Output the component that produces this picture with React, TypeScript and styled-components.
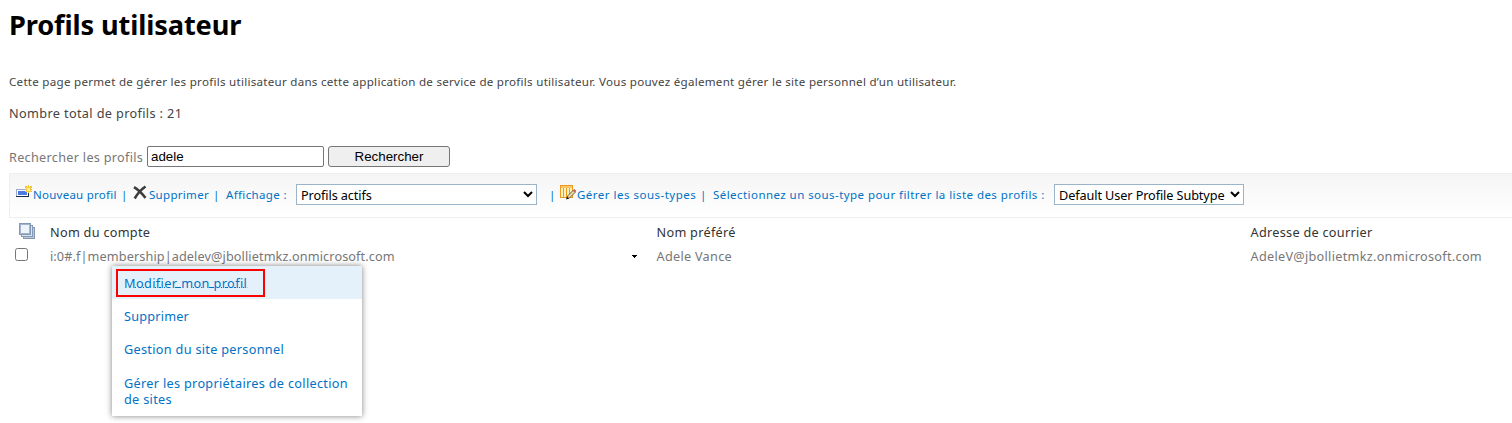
import React from 'react';
import styled, { createGlobalStyle } from 'styled-components';

const GlobalStyle = createGlobalStyle`
  *, *::before, *::after { box-sizing: border-box; }
  body {
    margin: 0;
    background: #fff;
    font-family: 'Noto Sans', sans-serif;
    font-size: 12.7px;
    color: #444;
  }
  svg { display: block; }
`;

const Page = styled.main`
  padding: 5px 0 0 9px;
  height: 423px;
  overflow: hidden;
`;

const Title = styled.h1`
  margin: 0;
  font-size: 27.2px;
  line-height: 40px;
  font-weight: 700;
  letter-spacing: -0.12px;
  color: #000;
`;

const Description = styled.p`
  margin: 27px 0 0;
  font-size: 11.6px;
  line-height: 20px;
  letter-spacing: 0.264px;
  white-space: nowrap;
`;

const Total = styled.p`
  margin: 11px 0 0;
  line-height: 20px;
  letter-spacing: 0.36px;
`;

const SearchBar = styled.form`
  display: flex;
  align-items: center;
  margin-top: 23px;
  height: 21px;
`;

const SearchLabel = styled.label`
  width: 138px;
  letter-spacing: 0.28px;
  color: #777;
  white-space: nowrap;
`;

const SearchInput = styled.input`
  width: 177px;
  height: 21px;
  padding: 1px 3px;
  border: 1px solid #767676;
  border-radius: 2px;
  font: 13.33px 'Liberation Sans', sans-serif;
  color: #000;
  outline: none;
`;

const SearchButton = styled.button`
  width: 122px;
  height: 21px;
  margin-left: 4px;
  padding: 0;
  border: 1px solid #767676;
  border-radius: 3px;
  background: #efefef;
  font: 13.33px 'Liberation Sans', sans-serif;
  color: #000;
`;

const Toolbar = styled.div`
  display: flex;
  align-items: center;
  height: 45px;
  margin-top: 6px;
  padding-left: 6px;
  border: 1px solid #eee;
  border-right: 0;
  background: linear-gradient(#f5f5f5, #fff);
  font-size: 11.5px;
  color: #0072c6;
  white-space: nowrap;
`;

const IconSlot = styled.span<{ $width: number }>`
  flex: none;
  width: ${(p) => p.$width}px;
  height: 16px;
  margin-top: -5px;
`;

const ToolText = styled.span<{ $width: number; $spacing?: number }>`
  flex: none;
  width: ${(p) => p.$width}px;
  margin-top: -2px;
  letter-spacing: ${(p) => p.$spacing ?? 0.3}px;
`;

const Spacer = styled.span`
  flex: none;
  width: 12px;
`;

const Select = styled.select<{ $width: number }>`
  flex: none;
  width: ${(p) => p.$width}px;
  height: 21px;
  margin-top: -2px;
  padding: 0;
  border: 1px solid #9bb4c8;
  border-radius: 0;
  background-color: #fff;
  font: 12.7px 'Noto Sans', sans-serif;
  letter-spacing: -0.1px;
  color: #000;
`;

const Row = styled.div<{ $header?: boolean }>`
  display: grid;
  grid-template-columns: 41px 606.5px 594px 1fr;
  align-items: center;
  height: ${(p) => (p.$header ? 27 : 22)}px;
  letter-spacing: 0.28px;
  color: ${(p) => (p.$header ? '#333' : '#777')};
`;

const StackSlot = styled.span`
  padding-left: 10px;
`;

const Checkbox = styled.input`
  width: 13px;
  height: 13px;
  margin: 0 0 3px 6px;
`;

const Account = styled.div`
  position: relative;
  display: flex;
  align-items: center;
  justify-content: space-between;
  padding-right: 20px;
  letter-spacing: 0.1px;
`;

const Menu = styled.ul`
  position: absolute;
  top: 19px;
  left: 62px;
  z-index: 1;
  width: 250px;
  height: 150px;
  margin: 0;
  padding: 0;
  list-style: none;
  background: #fff;
  box-shadow: 0 0 6px rgba(0, 0, 0, 0.5);
`;

const MenuItem = styled.li<{ $active?: boolean; $spacing: number }>`
  display: flex;
  align-items: center;
  height: 33.4px;
  padding: ${(p) => (p.$active ? 0 : '0 10px 0 12px')};
  line-height: 16px;
  letter-spacing: ${(p) => p.$spacing}px;
  color: #0072c6;
  background: ${(p) => (p.$active ? '#e5f1fa' : 'transparent')};
`;

const LastItem = styled(MenuItem)`
  height: auto;
  padding-top: 9px;
`;

const Highlight = styled.span`
  width: 149px;
  height: 28px;
  margin: 0 0 0 4px;
  padding-left: 6px;
  border: 2px solid #f00;
  line-height: 25px;
`;

const Linked = styled.span`
  text-decoration: underline 1px;
  text-underline-offset: -1px;
  text-decoration-skip-ink: auto;
`;

const NewIcon = () => (
  <svg width="17" height="16" viewBox="0 0 17 16" shapeRendering="crispEdges">
    <rect x="0" y="4" width="13" height="8" fill="#9aa9c6" />
    <rect x="1" y="5" width="11" height="6" fill="#fff" />
    <rect x="2" y="6" width="9" height="4" fill="#4c7be0" />
    <path d="M0 11h13v1H0zM12 5h1v7h-1z" fill="#1c2b4a" />
    <path d="M9 1h2v2H9zM12 0h1v8h-1zM14 1h2v2h-2zM9 4h7v1H9zM9 6h2v1H9zM14 6h2v1h-2z" fill="#f0bf2c" />
    <rect x="10" y="2" width="5" height="5" fill="#f4c93f" />
    <rect x="11" y="3" width="3" height="3" fill="#fff0a0" />
  </svg>
);

const DeleteIcon = () => (
  <svg width="16" height="16" viewBox="0 0 16 16" fill="none" stroke="#3d3d3d">
    <path d="M1 2.2Q6 5 12.5 12.8" strokeWidth="2.6" />
    <path d="M12.5 1.5Q6 6 1.7 13.5" strokeWidth="2.6" />
  </svg>
);

const SubtypeIcon = () => (
  <svg width="17" height="16" viewBox="0 0 17 16">
    <rect x="0.5" y="0.5" width="12" height="12" fill="#fff0bd" stroke="#ec9a1b" />
    <path d="M1 2h11" stroke="#f9c765" strokeWidth="2" />
    <path d="M3.5 3v9M6.5 3v9M9.5 3v9" stroke="#ec9a1b" />
    <path d="M7 13.5l1-3 5.5-5.5 2 2L9.5 13z" fill="#ead9a2" stroke="#5c5340" strokeWidth=".9" />
    <path d="M12.8 5.6l1.6-1.6 1.8 1.8-1.6 1.6z" fill="#b9655c" />
    <path d="M6 14.5l1-3 2.2 2z" fill="#222" />
  </svg>
);

const StackIcon = () => (
  <svg width="17" height="17" viewBox="0 0 17 17" stroke="#8598b3">
    <rect x="4.5" y="4.5" width="11" height="11" fill="#b9c8dc" />
    <rect x="2.5" y="2.5" width="11" height="11" fill="#dbe5f1" />
    <rect x="0.5" y="0.5" width="11" height="11" fill="#eef4fb" strokeWidth="1" />
    <rect x="1.5" y="1.5" width="9" height="9" fill="none" stroke="#a3b5ce" />
  </svg>
);

const CaretIcon = () => (
  <svg width="5" height="3" viewBox="0 0 5 3" shapeRendering="crispEdges">
    <path d="M0 0h5v1H0zM1 1h3v1H1zM2 2h1v1H2z" fill="#000" />
  </svg>
);

export default function App() {
  return (
    <Page>
      <GlobalStyle />
      <Title>Profils utilisateur</Title>
      <Description>
        Cette page permet de gérer les profils utilisateur dans cette application de service de profils utilisateur. Vous
        pouvez également gérer le site personnel d’un utilisateur.
      </Description>
      <Total>Nombre total de profils : 21</Total>
      <SearchBar>
        <SearchLabel htmlFor="search">Rechercher les profils</SearchLabel>
        <SearchInput id="search" defaultValue="adele" />
        <SearchButton type="button">Rechercher</SearchButton>
      </SearchBar>
      <Toolbar>
        <IconSlot $width={17}><NewIcon /></IconSlot>
        <ToolText $width={88} $spacing={0.25}>Nouveau profil</ToolText>
        <ToolText $width={12}>|</ToolText>
        <IconSlot $width={16}><DeleteIcon /></IconSlot>
        <ToolText $width={64}>Supprimer</ToolText>
        <ToolText $width={13}>|</ToolText>
        <ToolText $width={70} $spacing={0.36}>Affichage :</ToolText>
        <Select $width={241} defaultValue="actifs">
          <option value="actifs">Profils actifs</option>
        </Select>
        <Spacer />
        <ToolText $width={11}>|</ToolText>
        <IconSlot $width={17}><SubtypeIcon /></IconSlot>
        <ToolText $width={123} $spacing={0.49}>Gérer les sous-types</ToolText>
        <ToolText $width={13}>|</ToolText>
        <ToolText $width={341} $spacing={0.445}>Sélectionnez un sous-type pour filtrer la liste des profils :</ToolText>
        <Select $width={190} defaultValue="default">
          <option value="default">Default User Profile Subtype</option>
        </Select>
      </Toolbar>
      <Row $header>
        <StackSlot><StackIcon /></StackSlot>
        <span>Nom du compte</span>
        <span>Nom préféré</span>
        <span>Adresse de courrier</span>
      </Row>
      <Row>
        <Checkbox type="checkbox" />
        <Account>
          <span>i:0#.f|membership|adelev@jbollietmkz.onmicrosoft.com</span>
          <CaretIcon />
          <Menu>
            <MenuItem $active $spacing={0.4}>
              <Highlight><Linked>Modifier mon profil</Linked></Highlight>
            </MenuItem>
            <MenuItem $spacing={0.2}>Supprimer</MenuItem>
            <MenuItem $spacing={0.3}>Gestion du site personnel</MenuItem>
            <LastItem $spacing={0.31}>Gérer les propriétaires de collection de sites</LastItem>
          </Menu>
        </Account>
        <span>Adele Vance</span>
        <span>AdeleV@jbollietmkz.onmicrosoft.com</span>
      </Row>
    </Page>
  );
}
